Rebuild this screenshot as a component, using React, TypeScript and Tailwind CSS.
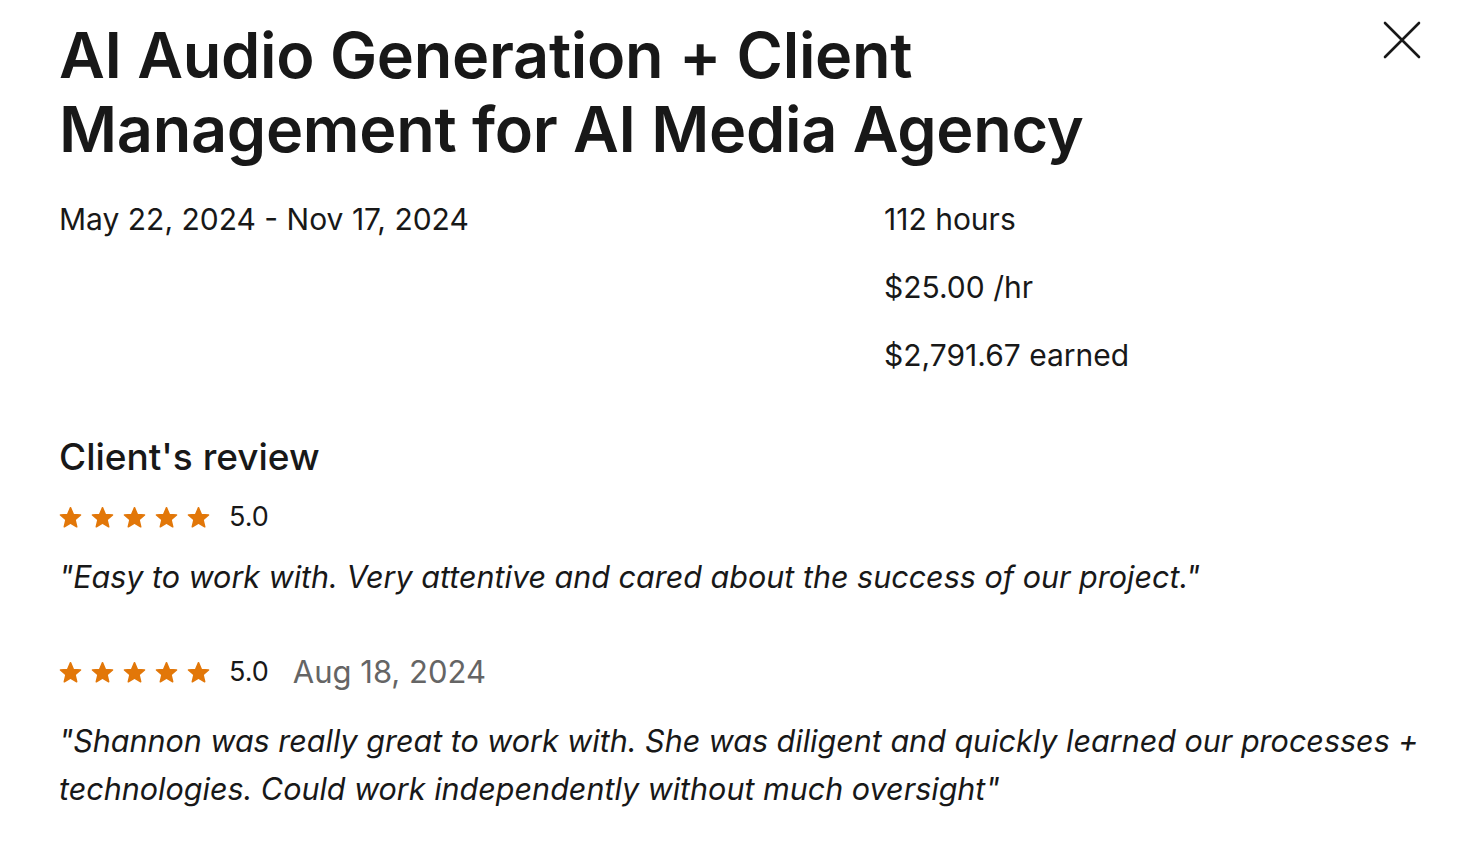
import React from 'react';

const Star = () => (
  <svg viewBox="-0.5 -0.5 25 25" className="w-[23px] h-[23px]" fill="#e27709">
    <path
      d="M12 1.3L15.06 8.59L22.94 9.25L16.95 14.41L18.76 22.1L12 18L5.24 22.1L7.05 14.41L1.06 9.25L8.94 8.59Z"
      stroke="#e27709"
      strokeWidth={1.6}
      strokeLinejoin="round"
    />
  </svg>
);

const Stars = () => (
  <div className="flex items-center gap-[9px]">
    {[0, 1, 2, 3, 4].map((i) => (
      <Star key={i} />
    ))}
  </div>
);

export default function App() {
  return (
    <div
      className="w-[1470px] h-[848px] bg-white text-[#181818] relative overflow-hidden"
      style={{ fontFamily: 'Inter, "Liberation Sans", sans-serif' }}
    >
      <button className="absolute right-[48px] top-[20px] w-[40px] h-[40px] flex items-center justify-center">
        <svg viewBox="0 0 40 40" className="w-[40px] h-[40px]" fill="none" stroke="#181818" strokeWidth={2.6} strokeLinecap="round">
          <path d="M3 3L37 37M37 3L3 37" />
        </svg>
      </button>

      <div className="pl-[59px] pr-[48px] pt-[18px]">
        <h1 className="text-[63px] leading-[74px] font-semibold tracking-[-0.3px] max-w-[1100px]">
          AI Audio Generation + Client
          <br />
          Management for AI Media Agency
        </h1>

        <div className="flex mt-[33px]">
          <div className="w-[825px] text-[30px] leading-[40px]">May 22, 2024 - Nov 17, 2024</div>
          <div className="flex flex-col gap-[28px] text-[30px] leading-[40px]">
            <div>112 hours</div>
            <div>$25.00 /hr</div>
            <div>$2,791.67 earned</div>
          </div>
        </div>

        <h2 className="mt-[58px] text-[37px] leading-[48px] font-medium">Client's review</h2>

        <div className="flex items-center gap-[19px] mt-[18px]">
          <Stars />
          <span className="text-[27px] leading-[36px]">5.0</span>
        </div>
        <p className="italic text-[30.5px] leading-[48px] mt-[18px]">
          "Easy to work with. Very attentive and cared about the success of our project."
        </p>

        <div className="flex items-center gap-[19px] mt-[51px]">
          <Stars />
          <span className="text-[27px] leading-[36px]">5.0</span>
          <span className="text-[31px] leading-[40px] text-[#656565] ml-[5px]">Aug 18, 2024</span>
        </div>
        <p className="italic text-[30.5px] leading-[48px] mt-[25px] max-w-[1370px]">
          "Shannon was really great to work with. She was diligent and quickly learned our processes + technologies. Could work independently without much oversight"
        </p>
      </div>
    </div>
  );
}
